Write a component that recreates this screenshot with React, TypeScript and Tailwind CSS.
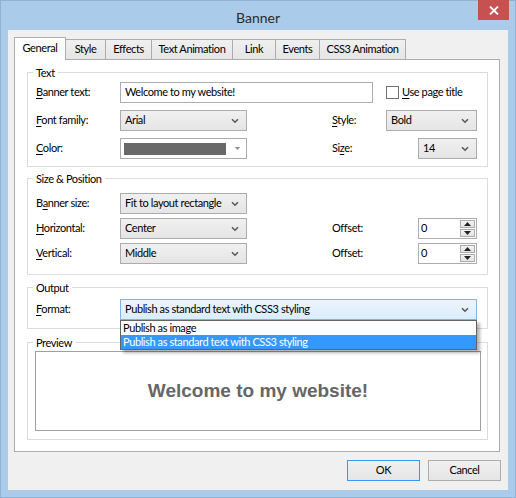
import React from 'react';

const Chevron: React.FC = () => (
  <svg width="8" height="6" viewBox="0 0 8 6" className="shrink-0">
    <path d="M1 1.2 L4 4.2 L7 1.2" stroke="#5a5a5a" strokeWidth="1.6" fill="none" />
  </svg>
);

const Combo: React.FC<{ w: string; text: string; focused?: boolean; children?: React.ReactNode }> = ({ w, text, focused, children }) => (
  <div className={`relative ${w} h-[21px]`}>
    <div
      className={`h-full flex items-center justify-between pl-[4px] pr-[7px] border ${
        focused
          ? 'border-[#7eb4ea] bg-gradient-to-b from-[#ecf4fc] to-[#dcecfc]'
          : 'border-[#acacac] bg-gradient-to-b from-[#f0f0f0] to-[#e5e5e5]'
      }`}
    >
      <span className="whitespace-nowrap">{text}</span>
      <Chevron />
    </div>
    {children}
  </div>
);

const Spin: React.FC<{ value: string }> = ({ value }) => (
  <div className="w-[59px] h-[21px] bg-white border border-[#abadb3] flex items-center justify-between pl-[2px] pr-[1px]">
    <span>{value}</span>
    <div className="flex flex-col w-[15px] h-[17px] gap-[1px]">
      <div className="flex-1 flex items-center justify-center border border-[#acacac] bg-gradient-to-b from-[#f3f3f3] to-[#e3e3e3]">
        <svg width="7" height="4" viewBox="0 0 7 4"><path d="M0 4 L3.5 0 L7 4 Z" fill="#222" /></svg>
      </div>
      <div className="flex-1 flex items-center justify-center border border-[#acacac] bg-gradient-to-b from-[#f3f3f3] to-[#e3e3e3]">
        <svg width="7" height="4" viewBox="0 0 7 4"><path d="M0 0 L3.5 4 L7 0 Z" fill="#222" /></svg>
      </div>
    </div>
  </div>
);

const Group: React.FC<{ title: string; className: string; children: React.ReactNode }> = ({ title, className, children }) => (
  <div className={`relative w-[461px] border border-[#dcdcdc] ${className}`}>
    <span className="absolute -top-[8px] left-[5px] px-[3px] bg-white leading-[15px]">{title}</span>
    {children}
  </div>
);

const Label: React.FC<{ children: React.ReactNode; w?: string }> = ({ children, w = 'w-[84px]' }) => (
  <span className={`${w} shrink-0`}>{children}</span>
);

const U: React.FC<{ children: React.ReactNode }> = ({ children }) => <span className="underline underline-offset-2">{children}</span>;

const tabs = [
  { label: 'General', w: 'w-[52px]', active: true },
  { label: 'Style', w: 'w-[40px]' },
  { label: 'Effects', w: 'w-[46px]' },
  { label: 'Text Animation', w: 'w-[81px]' },
  { label: 'Link', w: 'w-[43px]' },
  { label: 'Events', w: 'w-[44px]' },
  { label: 'CSS3 Animation', w: 'w-[86px]' },
];

const App: React.FC = () => {
  return (
    <div className="w-[516px] h-[498px] bg-[#aacbe9] border border-[#8fb4d8] flex flex-col font-['Lato','Liberation_Sans',sans-serif] text-[11px] tracking-[-0.4px] text-black">
      {/* Title bar */}
      <div className="h-[29px] grid grid-cols-[1fr_auto_1fr] items-start">
        <div />
        <div className="pt-[6px] text-[14px] tracking-normal text-[#2b2b2b]">Banner</div>
        <div className="flex justify-end pr-[6px]">
          <div className="w-[31px] h-[20px] -mt-[1px] bg-[#c75050] flex items-center justify-center">
            <svg width="10" height="9" viewBox="0 0 10 9">
              <path d="M1 0.5 L9 8.5 M9 0.5 L1 8.5" stroke="white" strokeWidth="1.8" />
            </svg>
          </div>
        </div>
      </div>

      {/* Client area */}
      <div className="mx-[7px] h-[460px] bg-[#f0f0f0] px-[6px] pt-[7px] flex flex-col">
        {/* Tabs */}
        <div className="flex items-end h-[22px]">
          {tabs.map((t, i) => (
            <div
              key={t.label}
              className={`${t.w} whitespace-nowrap flex items-center justify-center border-t border-r border-[#acacac] ${i === 0 ? 'border-l' : ''} ${
                t.active
                  ? 'h-[23px] -mb-[1px] bg-white relative z-10 pb-[2px]'
                  : 'h-[20px] bg-gradient-to-b from-[#f0f0f0] to-[#e5e5e5]'
              }`}
            >
              {t.label}
            </div>
          ))}
        </div>

        {/* Tab panel */}
        <div className="w-[486px] h-[393px] bg-white border border-[#acacac] pl-[12px] flex flex-col">
          <Group title="Text" className="mt-[12px] h-[95px] pt-[9px] pl-[8px] flex flex-col gap-[7px]">
            <div className="flex items-center h-[21px]">
              <Label><U>B</U>anner text:</Label>
              <div className="w-[253px] h-[21px] bg-white border border-[#abadb3] flex items-center pl-[4px]">
                Welcome to my website!
              </div>
              <div className="ml-[13px] w-[13px] h-[13px] bg-white border border-[#707070]" />
              <span className="ml-[3px]"><U>U</U>se page title</span>
            </div>
            <div className="flex items-center h-[21px]">
              <Label><U>F</U>ont family:</Label>
              <Combo w="w-[127px]" text="Arial" />
              <Label w="w-[54px] ml-[85px]"><U>S</U>tyle:</Label>
              <Combo w="w-[91px]" text="Bold" />
            </div>
            <div className="flex items-center h-[21px]">
              <Label><U>C</U>olor:</Label>
              <div className="w-[127px] h-[21px] bg-white border border-[#acacac] flex items-center pl-[3px] pr-[6px] justify-between">
                <div className="w-[102px] h-[12px] bg-[#696969]" />
                <svg width="5" height="3" viewBox="0 0 5 3"><path d="M0 0 L2.5 3 L5 0 Z" fill="#8a8a8a" /></svg>
              </div>
              <Label w="w-[86px] ml-[85px]">Si<U>z</U>e:</Label>
              <Combo w="w-[59px]" text="14" />
            </div>
          </Group>

          <Group title="Size & Position" className="mt-[11px] h-[97px] pt-[14px] pl-[8px] flex flex-col gap-[4px]">
            <div className="flex items-center h-[21px]">
              <Label>B<U>a</U>nner size:</Label>
              <Combo w="w-[127px]" text="Fit to layout rectangle" />
            </div>
            <div className="flex items-center h-[21px]">
              <Label><U>H</U>orizontal:</Label>
              <Combo w="w-[127px]" text="Center" />
              <Label w="w-[86px] ml-[85px]">Offset:</Label>
              <Spin value="0" />
            </div>
            <div className="flex items-center h-[21px]">
              <Label><U>V</U>ertical:</Label>
              <Combo w="w-[127px]" text="Middle" />
              <Label w="w-[86px] ml-[85px]">Offset:</Label>
              <Spin value="0" />
            </div>
          </Group>

          <Group title="Output" className="mt-[12px] h-[42px] pt-[11px] pl-[8px] z-20">
            <div className="flex items-center h-[21px]">
              <Label><U>F</U>ormat:</Label>
              <Combo w="w-[357px]" text="Publish as standard text with CSS3 styling" focused>
                {/* open dropdown list */}
                <div className="absolute top-full left-0 w-full bg-white border border-[#646464] shadow-[3px_3px_3px_rgba(0,0,0,0.3)] flex flex-col">
                  <div className="h-[14px] leading-[14px] pl-[2px]">Publish as image</div>
                  <div className="h-[14px] leading-[14px] pl-[2px] bg-[#3399ff] text-white">Publish as standard text with CSS3 styling</div>
                </div>
              </Combo>
            </div>
          </Group>

          <Group title="Preview" className="mt-[13px] h-[98px] pt-[8px] pl-[7px]">
            <div className="w-[446px] h-[80px] border border-[#a0a0a0] flex items-center justify-center">
              <span className="text-[19px] tracking-normal font-bold text-[#666666] font-['Liberation_Sans',Arial,sans-serif]">Welcome to my website!</span>
            </div>
          </Group>
        </div>

        {/* Buttons */}
        <div className="mt-[8px] flex justify-end gap-[8px] pr-[1px]">
          <div className="w-[73px] h-[21px] border border-[#3399ff] bg-gradient-to-b from-[#f0f0f0] to-[#e5e5e5] flex items-center justify-center">OK</div>
          <div className="w-[73px] h-[21px] border border-[#acacac] bg-gradient-to-b from-[#f0f0f0] to-[#e5e5e5] flex items-center justify-center">Cancel</div>
        </div>
      </div>
    </div>
  );
};

export default App;
